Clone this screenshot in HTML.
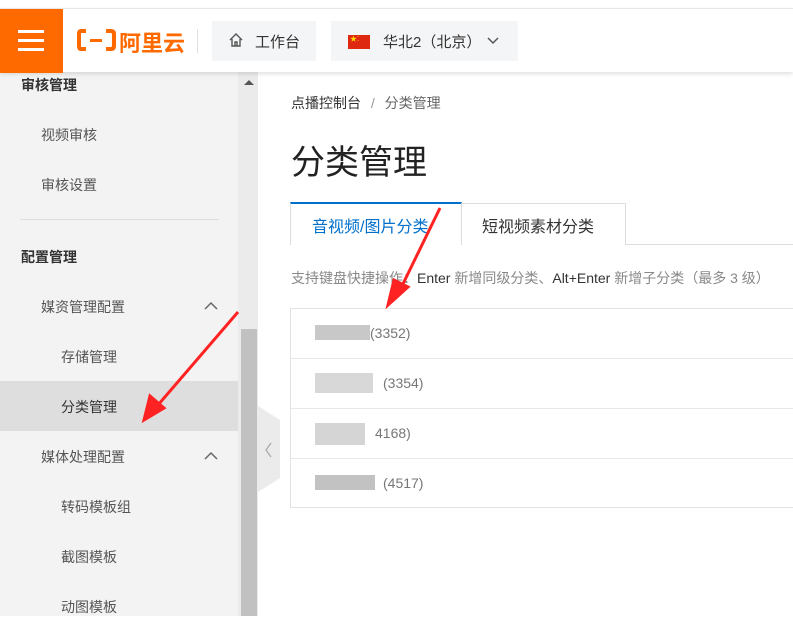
<!DOCTYPE html>
<html><head><meta charset="utf-8"><style>
*{margin:0;padding:0;box-sizing:border-box}
body{width:793px;height:616px;overflow:hidden;background:#fff;font-family:"Liberation Sans","Noto Sans CJK SC",sans-serif;position:relative}
.abs{position:absolute}
.hdr{left:0;top:8px;width:793px;height:64px;background:#fff;box-shadow:0 2px 4px rgba(0,0,0,.12);z-index:5;border-top:1px solid #e6e6e6}
.t{position:absolute;font-size:14px;color:#555;white-space:nowrap}
.h{color:#333;font-weight:bold}
</style></head><body>
<div class="abs" style="left:0;top:72px;width:238px;height:544px;background:#f3f3f3"></div>
<div class="abs" style="left:238px;top:72px;width:20px;height:544px;background:#ebebeb"></div>
<div class="abs" style="left:241px;top:329px;width:16px;height:287px;background:#c1c1c1"></div>
<div class="abs" style="left:244px;top:80px;width:0;height:0;border-left:5px solid transparent;border-right:5px solid transparent;border-bottom:5px solid #555"></div>
<div class="abs" style="left:0;top:381px;width:238px;height:50px;background:#dedede"></div>
<div class="abs" style="left:20px;top:219px;width:199px;height:1px;background:#ddd"></div>
<div class="t h" style="left:21px;top:75px">审核管理</div>
<div class="t" style="left:41px;top:125px">视频审核</div>
<div class="t" style="left:41px;top:175px">审核设置</div>
<div class="t h" style="left:21px;top:247px">配置管理</div>
<div class="t" style="left:41px;top:297px">媒资管理配置</div>
<div class="t" style="left:61px;top:347px">存储管理</div>
<div class="t" style="left:61px;top:397px;color:#333">分类管理</div>
<div class="t" style="left:41px;top:447px">媒体处理配置</div>
<div class="t" style="left:61px;top:497px">转码模板组</div>
<div class="t" style="left:61px;top:547px">截图模板</div>
<div class="t" style="left:61px;top:597px">动图模板</div>
<svg class="abs" style="left:203px;top:300px" width="16" height="12"><path d="M2 9 L8 3 L14 9" fill="none" stroke="#666" stroke-width="1.5"/></svg>
<svg class="abs" style="left:203px;top:450px" width="16" height="12"><path d="M2 9 L8 3 L14 9" fill="none" stroke="#666" stroke-width="1.5"/></svg>
<svg class="abs" style="left:258px;top:406px" width="22" height="86"><path d="M0 0 L22 14 L22 72 L0 86Z" fill="#ebebeb"/><path d="M13 37 L8 44 L13 51" fill="none" stroke="#aaa" stroke-width="1.3"/></svg>

<div class="abs hdr">
<div class="abs" style="left:0;top:0;width:63px;height:64px;background:#ff6a00"></div>
<div class="abs" style="left:18px;top:21px;width:26px;height:3px;background:#fff"></div>
<div class="abs" style="left:18px;top:30px;width:26px;height:3px;background:#fff"></div>
<div class="abs" style="left:18px;top:39px;width:26px;height:3px;background:#fff"></div>
<svg class="abs" style="left:77px;top:19px" width="40" height="24"><path d="M9 3 H4 Q2 3 2 6 V18 Q2 21 4 21 H9 M29 3 H34 Q37 3 37 6 V18 Q37 21 34 21 H29" fill="none" stroke="#ff6a00" stroke-width="4"/><rect x="13" y="11" width="12" height="3" fill="#ff6a00"/></svg>
<div class="t" style="left:119px;top:17px;font-size:22px;font-weight:bold;color:#ff6a00">阿里云</div>
<div class="abs" style="left:197px;top:20px;width:1px;height:24px;background:#e0e0e0"></div>
<div class="abs" style="left:212px;top:12px;width:104px;height:40px;background:#f4f5f6"></div>
<svg class="abs" style="left:228px;top:23px" width="16" height="16"><path d="M2 8 L8 2 L14 8 M4 7 V14 H12 V7 M7 14 V10 H9 V14" fill="none" stroke="#555" stroke-width="1.4"/></svg>
<div class="t" style="left:255px;top:22px;color:#333;font-size:15px">工作台</div>
<div class="abs" style="left:331px;top:12px;width:187px;height:40px;background:#f4f5f6"></div>
<div class="abs" style="left:348px;top:26px;width:22px;height:14px;background:#de2910"></div>
<div class="t" style="left:350px;top:25px;font-size:7px;color:#ffde00">★⁚</div>
<div class="t" style="left:383px;top:22px;color:#333;font-size:15px">华北2（北京）</div>
<svg class="abs" style="left:486px;top:27px" width="14" height="10"><path d="M2 2 L7 7 L12 2" fill="none" stroke="#555" stroke-width="1.5"/></svg>
</div>

<div class="t" style="left:291px;top:93px;font-size:14px;color:#333">点播控制台 <span style="color:#999;margin:0 6px">/</span> <span style="color:#666">分类管理</span></div>
<div class="t" style="left:291px;top:135px;font-size:34px;color:#222">分类管理</div>
<div class="abs" style="left:290px;top:244px;width:503px;height:1px;background:#ddd"></div>
<div class="abs" style="left:290px;top:202px;width:172px;height:43px;background:#fff;border-top:2px solid #0070cc;border-left:1px solid #ddd;border-right:1px solid #ddd"></div>
<div class="t" style="left:312px;top:213px;font-size:16px;color:#0070cc">音视频/图片分类</div>
<div class="abs" style="left:461px;top:203px;width:165px;height:42px;border:1px solid #ddd;border-bottom:none;background:#fff"></div>
<div class="t" style="left:482px;top:213px;font-size:16px;color:#333">短视频素材分类</div>
<div class="t" style="left:291px;top:268px;font-size:14px;color:#888">支持键盘快捷操作：<span style="color:#333">Enter</span> 新增同级分类、<span style="color:#333">Alt+Enter</span> 新增子分类（最多 3 级）</div>
<div class="abs" style="left:290px;top:308px;width:503px;height:200px;border:1px solid #e3e3e3;border-right:none"></div>
<div class="abs" style="left:291px;top:358px;width:502px;height:1px;background:#e8e8e8"></div>
<div class="abs" style="left:291px;top:408px;width:502px;height:1px;background:#e8e8e8"></div>
<div class="abs" style="left:291px;top:458px;width:502px;height:1px;background:#e8e8e8"></div>
<div class="abs" style="left:315px;top:325px;width:55px;height:15px;background:#c8c8c8"></div>
<div class="abs" style="left:315px;top:373px;width:58px;height:20px;background:#d8d8d8"></div>
<div class="abs" style="left:315px;top:423px;width:50px;height:22px;background:#d5d5d5"></div>
<div class="abs" style="left:315px;top:475px;width:60px;height:15px;background:#c2c2c2"></div>
<div class="t" style="left:370px;top:325px;color:#777">(3352)</div>
<div class="t" style="left:383px;top:375px;color:#777">(3354)</div>
<div class="t" style="left:375px;top:425px;color:#777">4168)</div>
<div class="t" style="left:383px;top:475px;color:#777">(4517)</div>
<svg class="abs" style="left:0;top:0;z-index:9" width="793" height="616"><g stroke="#f22" stroke-width="3" fill="#f22"><line x1="440" y1="208" x2="400" y2="290"/><path d="M388 305 L394 280 L408 287Z"/><line x1="238" y1="312" x2="158" y2="405"/><path d="M144 420 L150 396 L164 408Z"/></g></svg>
</body></html>
